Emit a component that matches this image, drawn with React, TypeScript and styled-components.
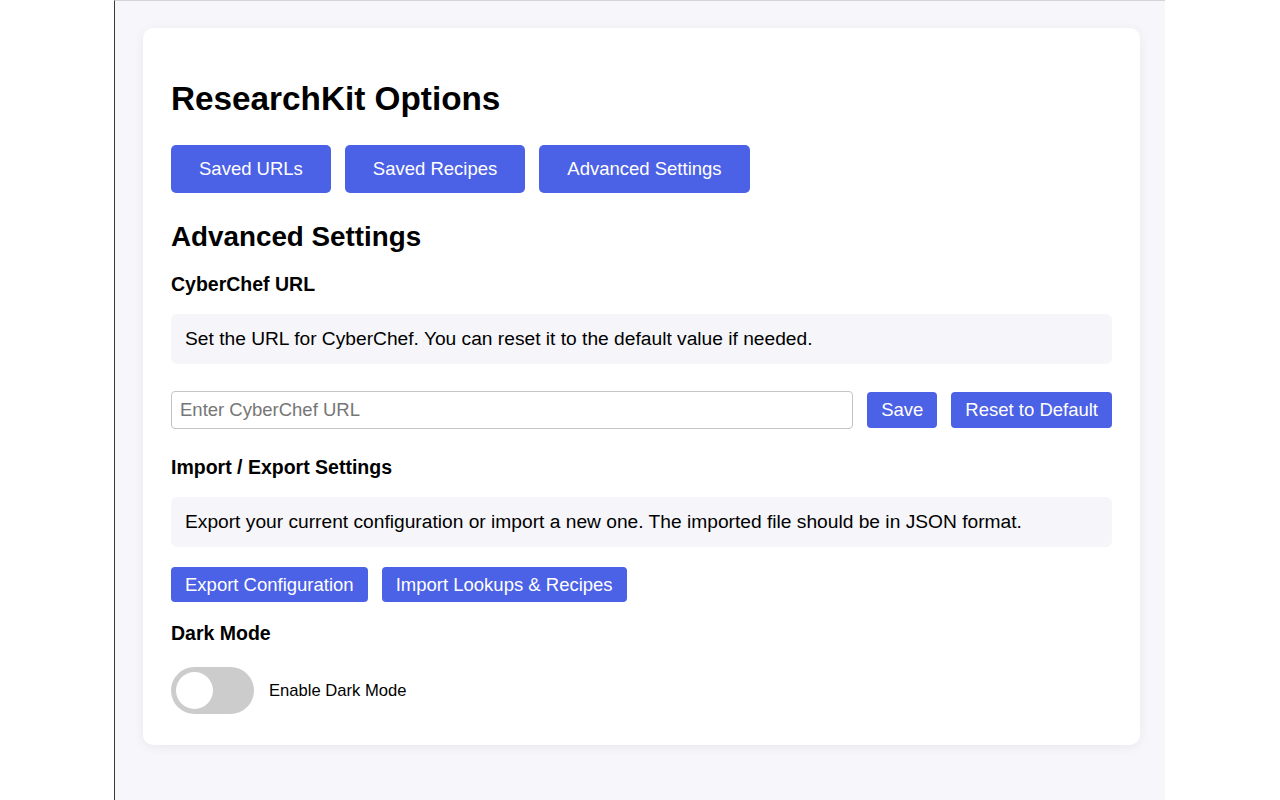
import React, { useState } from "react";
import styled, { createGlobalStyle } from "styled-components";

const Global = createGlobalStyle`
  html, body { margin: 0; padding: 0; background: #ffffff; }
  body { font-family: "Liberation Sans", Arial, Helvetica, sans-serif; color: #000; }
  * { box-sizing: border-box; }
`;

const Frame = styled.div`
  margin-left: 114px;
  width: 1051px;
  min-height: 800px;
  background: #f7f7fb;
  border-left: 1px solid #3a3a3a;
  border-top: 1px solid #d4d4d8;
  padding: 27px 25px 40px 28px;
`;

const Card = styled.div`
  background: #ffffff;
  border-radius: 10px;
  box-shadow: 0 2px 12px rgba(0, 0, 0, 0.06);
  padding: 28px 28px 31px 28px;
  width: 997px;
`;

const Title = styled.h1`
  font-size: 33.3px;
  font-weight: 700;
  line-height: 37px;
  margin: 24px 0 28px 0;
`;

const Tabs = styled.div`
  display: flex;
  gap: 14px;
  margin-bottom: 28px;
`;

const Button = styled.button<{ $size?: "tab" | "sm" | "xs" }>`
  background: #4b61e6;
  color: #ffffff;
  border: none;
  border-radius: ${(p) => (p.$size === "tab" ? "5px" : "4px")};
  font-family: "Liberation Sans", Arial, sans-serif;
  font-size: 18.5px;
  line-height: ${(p) => (p.$size === "xs" ? "19px" : "20px")};
  padding: ${(p) => (p.$size === "tab" ? "14px 28px" : "8px 14px")};
  cursor: pointer;
  white-space: nowrap;
  flex: none;
`;

const SectionTitle = styled.h2`
  font-size: 27.8px;
  font-weight: 700;
  line-height: 32px;
  margin: 0 0 20px 0;
`;

const SubTitle = styled.h3<{ $flush?: boolean }>`
  font-size: 19.5px;
  font-weight: 700;
  line-height: 22px;
  margin: 0 0 ${(p) => (p.$flush ? "0" : "19px")} 0;
`;

const Description = styled.p`
  background: #f6f6fa;
  border-radius: 6px;
  font-size: 19.2px;
  line-height: 22px;
  padding: 14px 14px;
  margin: 0 0 20px 0;
`;

const InputRow = styled.div`
  display: flex;
  align-items: center;
  gap: 14px;
  margin-top: 27px;
  margin-bottom: 27px;
`;

const TextInput = styled.input`
  flex: 1;
  min-width: 0;
  height: 38px;
  border: 1px solid #c4c4c4;
  border-radius: 4px;
  font-family: "Liberation Sans", Arial, sans-serif;
  font-size: 18.5px;
  padding: 0 8px;
  color: #000;
  &::placeholder { color: #767676; }
`;

const ButtonRow = styled.div`
  display: flex;
  gap: 14px;
  margin-bottom: 20px;
`;

const ToggleRow = styled.label`
  display: flex;
  align-items: center;
  gap: 15px;
  margin-top: 23px;
  font-size: 16.6px;
  cursor: pointer;
`;

const Track = styled.span<{ $on: boolean }>`
  position: relative;
  width: 83px;
  height: 47px;
  border-radius: 24px;
  background: ${(p) => (p.$on ? "#4b61e6" : "#cccccc")};
  flex: none;
`;

const Knob = styled.span<{ $on: boolean }>`
  position: absolute;
  top: 5px;
  left: ${(p) => (p.$on ? "41px" : "5px")};
  width: 37px;
  height: 37px;
  border-radius: 50%;
  background: #ffffff;
`;

const HiddenCheck = styled.input`
  display: none;
`;

export default function App() {
  const [dark, setDark] = useState(false);
  return (
    <>
      <Global />
      <Frame>
        <Card>
          <Title>ResearchKit Options</Title>
          <Tabs>
            <Button $size="tab">Saved URLs</Button>
            <Button $size="tab">Saved Recipes</Button>
            <Button $size="tab">Advanced Settings</Button>
          </Tabs>
          <SectionTitle>Advanced Settings</SectionTitle>
          <SubTitle>CyberChef URL</SubTitle>
          <Description>
            Set the URL for CyberChef. You can reset it to the default value if needed.
          </Description>
          <InputRow>
            <TextInput placeholder="Enter CyberChef URL" />
            <Button $size="sm">Save</Button>
            <Button $size="sm">Reset to Default</Button>
          </InputRow>
          <SubTitle>Import / Export Settings</SubTitle>
          <Description>
            Export your current configuration or import a new one. The imported file should be in JSON format.
          </Description>
          <ButtonRow>
            <Button $size="xs">Export Configuration</Button>
            <Button $size="xs">Import Lookups &amp; Recipes</Button>
          </ButtonRow>
          <SubTitle $flush>Dark Mode</SubTitle>
          <ToggleRow>
            <HiddenCheck type="checkbox" checked={dark} onChange={() => setDark(!dark)} />
            <Track $on={dark}>
              <Knob $on={dark} />
            </Track>
            Enable Dark Mode
          </ToggleRow>
        </Card>
      </Frame>
    </>
  );
}
